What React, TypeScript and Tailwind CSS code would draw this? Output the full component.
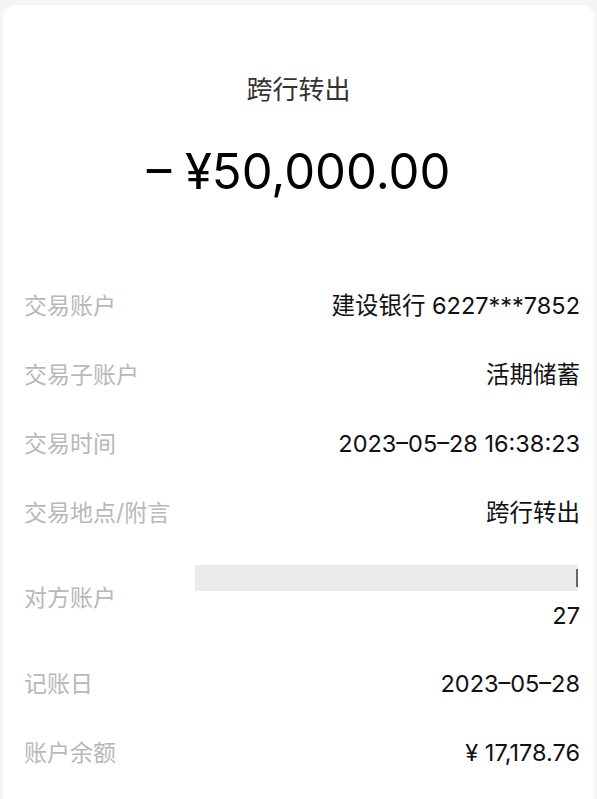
import React from 'react';

const rows: { label: string; value: string }[] = [
  { label: '交易账户', value: '建设银行 6227***7852' },
  { label: '交易子账户', value: '活期储蓄' },
  { label: '交易时间', value: '2023–05–28 16:38:23' },
  { label: '交易地点/附言', value: '跨行转出' },
];

const tail: { label: string; value: string }[] = [
  { label: '记账日', value: '2023–05–28' },
  { label: '账户余额', value: '¥ 17,178.76' },
];

const font = { fontFamily: 'Inter, "Noto Sans CJK SC", sans-serif' };

const Row: React.FC<{ label: string; value: string }> = ({ label, value }) => (
  <div className="flex h-[69px] items-center justify-between pl-[21px] pr-[14px]">
    <span className="text-[23px] leading-[30px] text-[#b8b8b8]">{label}</span>
    <span className="text-[23.5px] leading-[30px] text-[#111111]">{value}</span>
  </div>
);

export default function App() {
  return (
    <div className="min-h-screen overflow-hidden bg-[#f5f5f5] pt-[5px]" style={font}>
      <div className="mx-[3px] min-h-[820px] rounded-[14px] bg-white">
        {/* header */}
        <div className="flex flex-col items-center pt-[67px]">
          <div className="text-[26px] leading-[36px] text-[#333333]">跨行转出</div>
          <div className="mt-[39px] text-[49px] leading-[50px] text-black">– ¥50,000.00</div>
        </div>

        {/* details */}
        <div className="mt-[74px]">
          {rows.map((r) => (
            <Row key={r.label} label={r.label} value={r.value} />
          ))}

          <div className="flex h-[102px] items-center justify-between pl-[21px] pr-[14px]">
            <span className="text-[23px] leading-[30px] text-[#b8b8b8]">对方账户</span>
            <div className="flex flex-col items-end">
              <div className="mr-[2px] flex h-[26px] w-[383px] items-center justify-end bg-[#ebebeb]">
                <div className="h-[18px] w-[2px] bg-[#666666]" />
              </div>
              <span className="mt-[10px] text-[23.5px] leading-[30px] text-[#111111]">27</span>
            </div>
          </div>

          {tail.map((r) => (
            <Row key={r.label} label={r.label} value={r.value} />
          ))}
        </div>
      </div>
    </div>
  );
}
